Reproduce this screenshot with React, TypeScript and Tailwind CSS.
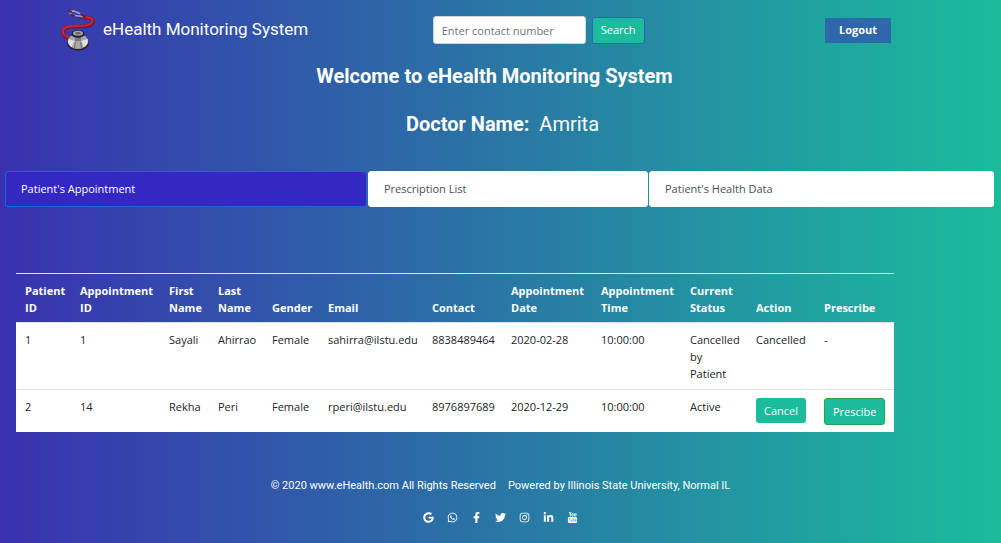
import React from 'react';
import {
  FaGoogle,
  FaWhatsapp,
  FaFacebookF,
  FaTwitter,
  FaInstagram,
  FaLinkedinIn,
} from 'react-icons/fa';

interface Appointment {
  patientId: number;
  appointmentId: number;
  firstName: string;
  lastName: string;
  gender: string;
  email: string;
  contact: string;
  date: string;
  time: string;
  status: string;
  active: boolean;
}

const appointments: Appointment[] = [
  {
    patientId: 1,
    appointmentId: 1,
    firstName: 'Sayali',
    lastName: 'Ahirrao',
    gender: 'Female',
    email: 'sahirra@ilstu.edu',
    contact: '8838489464',
    date: '2020-02-28',
    time: '10:00:00',
    status: 'Cancelled by Patient',
    active: false,
  },
  {
    patientId: 2,
    appointmentId: 14,
    firstName: 'Rekha',
    lastName: 'Peri',
    gender: 'Female',
    email: 'rperi@ilstu.edu',
    contact: '8976897689',
    date: '2020-12-29',
    time: '10:00:00',
    status: 'Active',
    active: true,
  },
];

const columns = [
  { title: 'Patient ID', width: 'w-[55px]' },
  { title: 'Appointment ID', width: 'w-[89px]' },
  { title: 'First Name', width: 'w-[49px]' },
  { title: 'Last Name', width: 'w-[54px]' },
  { title: 'Gender', width: 'w-[56px]' },
  { title: 'Email', width: 'w-[104px]' },
  { title: 'Contact', width: 'w-[79px]' },
  { title: 'Appointment Date', width: 'w-[90px]' },
  { title: 'Appointment Time', width: 'w-[89px]' },
  { title: 'Current Status', width: 'w-[66px]' },
  { title: 'Action', width: 'w-[68px]' },
  { title: 'Prescribe', width: 'w-[79px]' },
];

const StethoscopeLogo: React.FC = () => (
  <svg viewBox="0 0 34 42" className="h-[42px] w-[34px]" fill="none" aria-hidden="true">
    <path d="M20 8C27 9 33 9 32 13C30.500 18 23 17.500 15 17.500C7 17.500 1.500 19 2 23.500C2.500 28 7 28.500 11 31" stroke="#7c1224" strokeWidth="3.600" strokeLinecap="round" />
    <path d="M20 7.500C27 8.500 32.500 8.500 31.500 12.500C30 17 23 16.800 15 16.800C7 16.800 1.300 18.500 1.800 23C2.300 27.500 7 28 11 30" stroke="#d0202c" strokeWidth="2.200" strokeLinecap="round" />
    <path d="M7.500 2.500L13 2L21 5.500M8 2.500L11 6L21 7.500" stroke="#9aa3bd" strokeWidth="1.500" strokeLinecap="round" />
    <path d="M7 1.500L10 3M10.500 6L13 7M20 5L24 8" stroke="#5a2338" strokeWidth="2" strokeLinecap="round" />
    <g transform="translate(-1.500 0)">
      <ellipse cx="18.500" cy="33.500" rx="11" ry="8.300" fill="#24242c" />
      <ellipse cx="18.500" cy="32.500" rx="10.300" ry="7.500" fill="#a9aaa8" />
      <path d="M9 30L15 32L12 38C9 36 8 33 9 30ZM22 32L28 30C29 34 27 37 24 38Z" fill="#e2e2df" />
      <path d="M16 33L15 39M21 33L22 39" stroke="#74777a" strokeWidth="1.200" />
      <rect x="15.500" y="27" width="6" height="5" fill="#77797c" />
      <ellipse cx="18.500" cy="25" rx="6.500" ry="3.800" fill="#1f2028" />
      <ellipse cx="18.500" cy="24.300" rx="5" ry="2.500" fill="#a6a7a8" />
      <ellipse cx="18.500" cy="24.300" rx="3" ry="1.300" fill="#65676c" />
    </g>
  </svg>
);

// Old style logo: lettering on top of the tube-shaped box
const YoutubeIcon: React.FC = () => (
  <svg viewBox="0 0 22 24" className="h-[11px] w-[11px]" aria-hidden="true">
    <rect x="1" y="11" width="20" height="13" rx="3" fill="currentColor" />
    <g fill="none" stroke="currentColor" strokeWidth="2">
      <path d="M4 0L6 5V10M8 0L6 5" />
      <rect x="9.500" y="3.500" width="2.800" height="5.500" rx="1.400" />
      <path d="M15 2.500V8.500H18.500V2.500" />
    </g>
    <g fill="none" stroke="#2a78a6" strokeWidth="0.800">
      <path d="M3 14H7M5 14V21M8 16V20.500H10.500V16M12.500 13.500V20.500H14.500V16.500H12.500M19 19V20.500H17V16.500H19V18.500H17" />
    </g>
  </svg>
);

const socialLinks = [
  { name: 'Google', icon: <FaGoogle /> },
  { name: 'WhatsApp', icon: <FaWhatsapp /> },
  { name: 'Facebook', icon: <FaFacebookF /> },
  { name: 'Twitter', icon: <FaTwitter /> },
  { name: 'Instagram', icon: <FaInstagram /> },
  { name: 'LinkedIn', icon: <FaLinkedinIn /> },
  { name: 'YouTube', icon: <YoutubeIcon /> },
];

const Header: React.FC = () => (
  <header className="flex h-[60px] items-center pl-[61px] pr-[110px]">
    <a href="#home" className="flex flex-[374] items-center gap-2 font-[Roboto,sans-serif] text-[17px] whitespace-nowrap text-white">
      <StethoscopeLogo />
      eHealth Monitoring System
    </a>
    <form className="flex items-center gap-[6px]" onSubmit={(e) => e.preventDefault()}>
      <input
        type="text"
        aria-label="Contact number"
        placeholder="Enter contact number"
        className="h-[28px] w-[153px] rounded-[3px] border border-[#ced4da] bg-white px-2 text-[11px] text-[#495057] placeholder:text-[#6c757d]"
      />
      <button type="submit" className="h-[27px] rounded-[3px] border border-[#2f63b5] bg-[#1abc9c] px-2 text-[11px] text-white">
        Search
      </button>
    </form>
    <div className="flex flex-[248] justify-end">
      <button type="button" className="h-[25px] bg-[#2f67ab] px-[14px] text-[11px] font-bold text-white">
        Logout
      </button>
    </div>
  </header>
);

const Tabs: React.FC = () => (
  <nav className="mt-[33px] grid grid-cols-[362fr_280fr_345fr] gap-px pl-[5px] pr-[7px] text-[11px]">
    <a href="#appointments" className="flex h-[36px] items-center rounded-[3px] border border-[#1c66dc] bg-[#3428c2] px-[15px] text-white">
      Patient's Appointment
    </a>
    <a href="#prescriptions" className="flex h-[36px] items-center rounded-[3px] border border-white bg-white px-[15px] text-[#495057]">
      Prescription List
    </a>
    <a href="#health" className="flex h-[36px] items-center rounded-[3px] border border-white bg-white px-[15px] text-[#495057]">
      Patient's Health Data
    </a>
  </nav>
);

const AppointmentTable: React.FC = () => (
  <div className="mt-[66px] ml-4 mr-[107px]">
    <table className="w-full table-fixed border-collapse text-left text-[11px] leading-[17px]">
      <thead>
        <tr className="border-t border-[#dee2e6] text-white">
          {columns.map((col) => (
            <th key={col.title} scope="col" className={`${col.width} pt-2 pr-1 pb-[6px] pl-[9px] align-bottom font-bold`}>
              {col.title}
            </th>
          ))}
        </tr>
      </thead>
      <tbody className="bg-white text-[#212529]">
        {appointments.map((item) => (
          <tr key={item.appointmentId} className="border-t border-[#dee2e6] align-top *:pt-2 *:pr-[9px] *:pb-[7px] *:pl-[9px]">
            <td>{item.patientId}</td>
            <td>{item.appointmentId}</td>
            <td>{item.firstName}</td>
            <td>{item.lastName}</td>
            <td>{item.gender}</td>
            <td>{item.email}</td>
            <td>{item.contact}</td>
            <td>{item.date}</td>
            <td>{item.time}</td>
            <td>{item.status}</td>
            <td>
              {item.active ? (
                <button type="button" className="block h-[25px] rounded-[3px] bg-[#1abc9c] px-2 text-white">
                  Cancel
                </button>
              ) : (
                'Cancelled'
              )}
            </td>
            <td>
              {item.active ? (
                <button type="button" className="block h-[27px] rounded-[3px] border border-[#28a745] bg-[#1abc9c] px-2 text-white">
                  Prescibe
                </button>
              ) : (
                '-'
              )}
            </td>
          </tr>
        ))}
      </tbody>
    </table>
  </div>
);

const Footer: React.FC = () => (
  <footer className="mt-[46px] flex flex-col items-center gap-[18px] pb-4 font-[Roboto,sans-serif] text-[11px] leading-4 text-white">
    <p className="flex gap-3">
      <span>© 2020 www.eHealth.com All Rights Reserved</span>
      <span>Powered by Illinois State University, Normal IL</span>
    </p>
    <div className="flex items-center gap-[13px]">
      {socialLinks.map((link) => (
        <a key={link.name} href={`#${link.name.toLowerCase()}`} aria-label={link.name}>
          {link.icon}
        </a>
      ))}
    </div>
  </footer>
);

const App: React.FC = () => {
  return (
    <div className="min-h-screen bg-[linear-gradient(to_right,#3931af,#1abc9c)] font-['Open_Sans',sans-serif]">
      <Header />
      <main>
        <div className="flex flex-col items-center gap-5 pr-3 font-[Roboto,sans-serif] text-[20px] leading-7 text-white">
          <h1 className="mt-[2px] font-bold">Welcome to eHealth Monitoring System</h1>
          <h2 className="flex gap-[10px] pl-4">
            <span className="font-bold">Doctor Name:</span>
            <span>Amrita</span>
          </h2>
        </div>
        <Tabs />
        <AppointmentTable />
      </main>
      <Footer />
    </div>
  );
};

export default App;
